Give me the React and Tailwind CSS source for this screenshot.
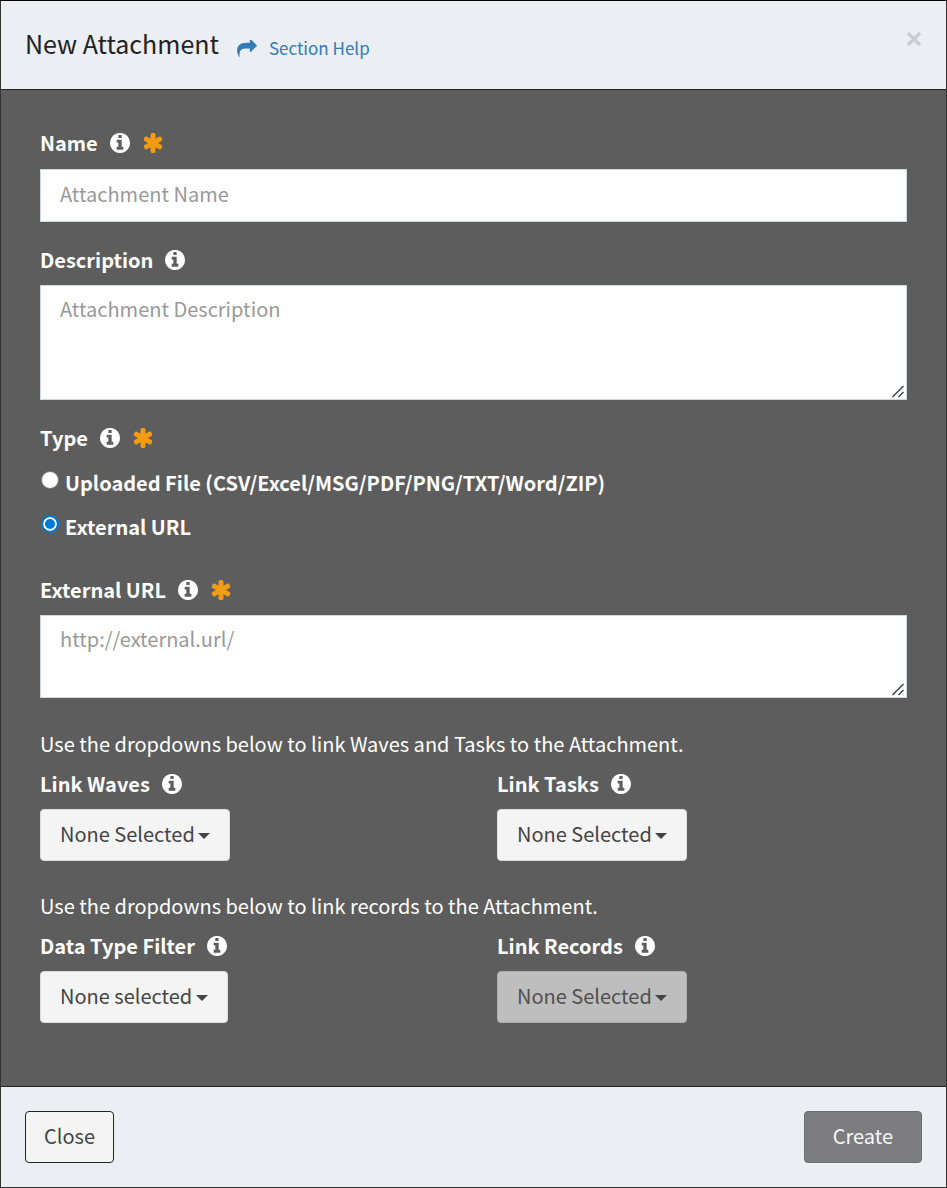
const ICON_PATHS = {
  info: 'M1152 1376v-160q0-14-9-23t-23-9h-96v-512q0-14-9-23t-23-9h-320q-14 0-23 9t-9 23v160q0 14 9 23t23 9h96v320h-96q-14 0-23 9t-9 23v160q0 14 9 23t23 9h448q14 0 23-9t9-23zm-128-896v-160q0-14-9-23t-23-9h-192q-14 0-23 9t-9 23v160q0 14 9 23t23 9h192q14 0 23-9t9-23zm640 416q0 209-103 385.5t-279.5 279.5-385.5 103-385.5-103-279.5-279.5-103-385.5 103-385.5 279.5-279.5 385.5-103 385.5 103 279.5 279.5 103 385.5z',
  required: 'M1546 1050q46 26 59.5 77.5t-12.5 97.5l-64 110q-26 46-77.5 59.5t-97.5-12.5l-266-153v307q0 52-38 90t-90 38h-128q-52 0-90-38t-38-90v-307l-266 153q-46 26-97.5 12.5t-77.5-59.5l-64-110q-26-46-12.5-97.5t59.5-77.5l266-154-266-154q-46-26-59.5-77.5t12.5-97.5l64-110q26-46 77.5-59.5t97.5 12.5l266 153v-307q0-52 38-90t90-38h128q52 0 90 38t38 90v307l266-153q46-26 97.5-12.5t77.5 59.5l64 110q26 46 12.5 97.5t-59.5 77.5l-266 154z',
  share: 'M1792 640q0 26-19 45l-512 512q-19 19-45 19t-45-19-19-45v-256h-224q-98 0-175.5 6t-154 21.5-133 42.5-105.5 69.5-80 101-48.5 138.5-17.5 181q0 55 5 123 0 6 2.5 23.5t2.5 26.5q0 15-8.5 25t-23.5 10q-16 0-28-17-7-9-13-22t-13.5-30-10.5-24q-127-285-127-451 0-199 53-333 162-403 875-403h224v-256q0-26 19-45t45-19 45 19l512 512q19 19 19 45z',
}

const inputClass =
  'block w-full rounded-none border border-[#d2d6de] bg-white px-[19px] text-xl leading-[30px] text-[#555] placeholder:text-[#999] outline-none focus:border-[#3c8dbc]'

function FieldLabel({ htmlFor, required, children }) {
  const Label = htmlFor ? 'label' : 'span'
  return (
    <div className="flex h-7 items-center">
      <Label htmlFor={htmlFor} className="font-bold">
        {children}
      </Label>
      <svg viewBox="128 128 1536 1536" className="ml-3 size-5 fill-white" aria-hidden="true">
        <path d={ICON_PATHS.info} />
      </svg>
      {required && (
        <svg viewBox="128 128 1536 1536" className="ml-[13px] size-5 fill-[#f39c12]" aria-hidden="true">
          <path d={ICON_PATHS.required} />
        </svg>
      )}
    </div>
  )
}

function TextArea({ id, placeholder, className }) {
  return (
    <div className="relative mt-[11px]">
      <textarea id={id} placeholder={placeholder} className={`${inputClass} resize-none py-2 ${className}`} />
      <svg viewBox="0 0 14 14" className="pointer-events-none absolute right-0.5 bottom-0.5 size-3.5" aria-hidden="true">
        <path d="M1.5 13 12.5 2M7.5 13l5-5" fill="none" stroke="#444" strokeWidth="1.5" />
      </svg>
    </div>
  )
}

function TypeOption({ value, defaultChecked, children }) {
  return (
    <label className="flex h-[30px] items-center gap-1.5 font-bold">
      <input
        type="radio"
        name="type"
        value={value}
        defaultChecked={defaultChecked}
        className="mb-1.5 ml-px size-[18px] shrink-0 appearance-none rounded-full border border-[#767676] bg-white checked:border-2 checked:border-[#0078d7] checked:bg-[#0078d7] checked:inset-ring-2 checked:inset-ring-white"
      />
      {children}
    </label>
  )
}

function Dropdown({ id, label, text, disabled }) {
  return (
    <div>
      <FieldLabel htmlFor={id}>{label}</FieldLabel>
      <div className="relative mt-[11px] inline-block align-top">
        <select
          id={id}
          disabled={disabled}
          className="block h-[52px] appearance-none rounded border border-[#ddd] bg-[#f4f4f4] pr-[34px] pl-[19px] pb-0.5 text-xl text-[#444] disabled:border-[#adadad] disabled:bg-[#bebebe] disabled:text-[#505050] disabled:opacity-100"
        >
          <option>{text}</option>
        </select>
        <svg viewBox="0 0 12 6" className="pointer-events-none absolute top-6 right-5 h-1.5 w-3 fill-[#444]" aria-hidden="true">
          <path d="M0 0h12L6 6z" />
        </svg>
      </div>
    </div>
  )
}

function App() {
  return (
    <div
      role="dialog"
      aria-labelledby="modal-title"
      className="border border-[#333] border-t-black bg-[#5d5d5d] font-['Noto_Sans_CJK_SC',sans-serif] text-xl leading-[30px] text-white"
    >
      <header className="flex h-[89px] items-start border-b border-[#222] bg-[#ebeef3] px-6 pt-[22px]">
        <h4 id="modal-title" className="text-[25px] leading-10 text-[#222]">
          New Attachment
        </h4>
        <a href="#help" className="mt-2.5 ml-[18px] flex items-center gap-3 text-[17px] leading-[30px] text-[#337ab7]">
          <svg viewBox="0 128 1792 1536" className="h-[17px] w-5 fill-current" aria-hidden="true">
            <path d={ICON_PATHS.share} />
          </svg>
          Section Help
        </a>
        <button type="button" aria-label="Close dialog" className="ml-auto pt-2">
          <svg viewBox="0 0 16 16" className="size-4" aria-hidden="true">
            <path d="M2 2l12 12M14 2 2 14" stroke="#c9ccd1" strokeWidth="3.5" />
          </svg>
        </button>
      </header>

      <form id="attachment-form" className="px-[39px] pt-[39px] pb-[63px]">
        <FieldLabel htmlFor="name" required>
          Name
        </FieldLabel>
        <input id="name" type="text" placeholder="Attachment Name" className={`${inputClass} mt-3 h-[53px] pb-1`} />

        <div className="mt-6">
          <FieldLabel htmlFor="description">Description</FieldLabel>
          <TextArea id="description" placeholder="Attachment Description" className="h-[115px]" />
        </div>

        <div className="mt-6" role="radiogroup" aria-label="Type">
          <FieldLabel required>Type</FieldLabel>
          <div className="mt-4 flex flex-col gap-3.5">
            <TypeOption value="file">Uploaded File (CSV/Excel/MSG/PDF/PNG/TXT/Word/ZIP)</TypeOption>
            <TypeOption value="url" defaultChecked>
              External URL
            </TypeOption>
          </div>
        </div>

        <div className="mt-[34px]">
          <FieldLabel htmlFor="url" required>
            External URL
          </FieldLabel>
          <TextArea id="url" placeholder="http://external.url/" className="h-[83px]" />
        </div>

        <p className="mt-[31px]">Use the dropdowns below to link Waves and Tasks to the Attachment.</p>
        <div className="mt-[11px] grid grid-cols-2 gap-[47px]">
          <Dropdown id="waves" label="Link Waves" text="None Selected" />
          <Dropdown id="tasks" label="Link Tasks" text="None Selected" />
        </div>

        <p className="mt-[30px]">Use the dropdowns below to link records to the Attachment.</p>
        <div className="mt-[11px] grid grid-cols-2 gap-[47px]">
          <Dropdown id="data-type" label="Data Type Filter" text="None selected" />
          <Dropdown id="records" label="Link Records" text="None Selected" disabled />
        </div>
      </form>

      <footer className="flex items-center justify-between border-t border-[#222] bg-[#ebeef3] p-6">
        <button type="button" className="h-[52px] rounded border border-[#222] bg-[#f4f4f4] px-[18px] pb-0.5 text-[#444]">
          Close
        </button>
        <button
          type="submit"
          form="attachment-form"
          className="h-[52px] rounded border border-[#6b6e71] bg-[#7d7d7f] px-7 pb-0.5 text-[#f5f6f9]"
        >
          Create
        </button>
      </footer>
    </div>
  )
}

export default App
